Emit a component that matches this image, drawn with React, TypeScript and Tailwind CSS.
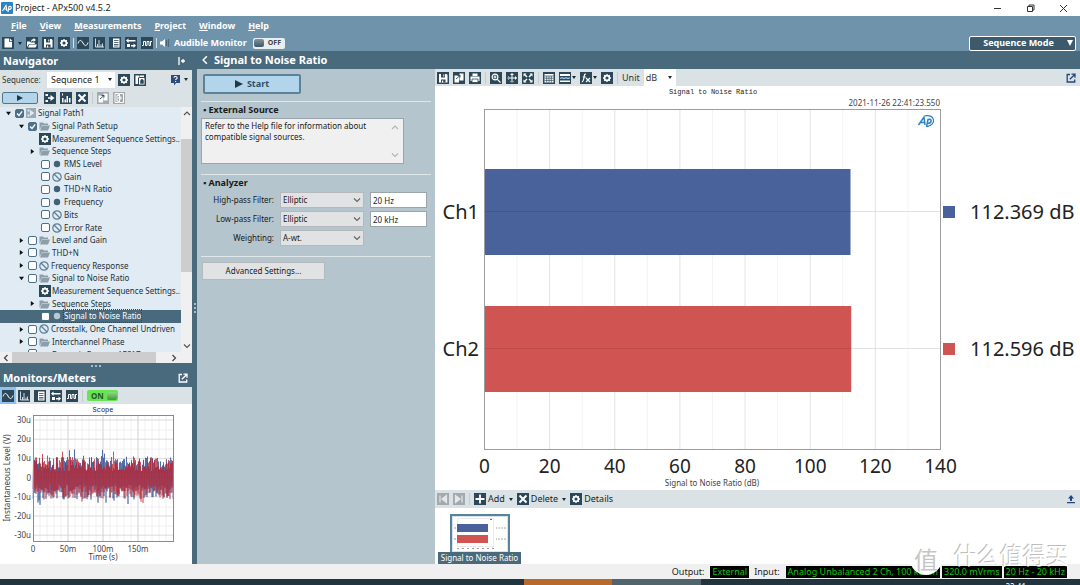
import { useState } from "react";

type IconName =
  | "new"
  | "open"
  | "save"
  | "gear"
  | "scope"
  | "fft"
  | "list"
  | "swap"
  | "digital"
  | "copyLock"
  | "stepIn"
  | "bars"
  | "close"
  | "copy"
  | "addPage"
  | "print"
  | "zoom"
  | "pan"
  | "fit"
  | "table"
  | "limits"
  | "fx"
  | "first"
  | "last"
  | "plus";

type TreeItem = {
  label: string;
  depth: 0 | 1 | 2;
  arrow?: "open" | "closed";
  check?: boolean;
  icon: "path" | "folder" | "gear" | "dot" | "off";
  selected?: boolean;
};

const gearPath = (
  <>
    <circle cx="6" cy="6" r="2.4" fill="none" stroke="#fff" strokeWidth="1.6" />
    <path
      d="M6 2v1.4M6 8.600v1.4M2 6h1.400M8.600 6H10M3.200 3.200l1 1M7.800 7.800l1 1M3.200 8.800l1-1M7.800 4.200l1-1"
      stroke="#fff"
      strokeWidth="1.3"
    />
  </>
);

const glyphs: Record<IconName, React.ReactNode> = {
  new: <path d="M2.500 1.500h4.500v3.300h3V10.500H2.500zM7.800 1.200L10.300 3.900H7.800z" fill="#fff" />,
  open: (
    <>
      <path d="M1 10V4.500h3l.8 1h4V7H3z" fill="#fff" />
      <path d="M2 10.500l1.500-3H11L9.500 10.500z" fill="#fff" />
      <path d="M5 4.500C5 2.800 6 2.200 7.500 2.200V1L10 3 7.500 5V3.700C6.500 3.700 6 4 6 4.500z" fill="#fff" />
    </>
  ),
  save: (
    <>
      <path d="M2 2h7.500L10.500 3v7.500H2z" fill="#fff" />
      <path d="M4 2h4v3.500H4zM4 7.500h4.500v3H4z" fill="#2c4858" />
      <path d="M6.300 2.500h1v2h-1zM5 8.500h1.200v2H5z" fill="#fff" />
    </>
  ),
  gear: gearPath,
  scope: <path d="M1 6.500C2.500 2.500 4 2.500 6 6s3.500 3.500 5-.5" fill="none" stroke="#fff" strokeWidth="1" />,
  fft: <path d="M2.500 1.500v8.500H11M4.500 10V7M6 10V3M8 10V7.500M9.500 10V6.500" fill="none" stroke="#dce8f2" strokeWidth=".9" />,
  list: (
    <>
      <path d="M4 1.500h6.500v9H4z" fill="#fff" />
      <path d="M5 3.500h4.500M5 5.500h4.500M5 7.500h4.500M5 9h4.500" stroke="#2c4858" strokeWidth=".8" />
    </>
  ),
  swap: <path d="M1 3.500L3.500 1.500V3h7v1.500h-7V6zM11 8.500L8.500 6.500V8H6v1.500h2.500V11zM2 7h3v3H2z" fill="#fff" />,
  digital: <path d="M1 8.500h1.500v-4h2v4H6v-4h2v4h1.500v-4H11" fill="none" stroke="#fff" strokeWidth="1" />,
  copyLock: (
    <>
      <path d="M1.500 1.500h4v2H4V10H1.500zM5 4h5.500v6.500H5z" fill="#fff" />
      <path d="M6.500 6.500h3v3h-3zM7 6.500V5.500h2v1" fill="#2c4858" stroke="#2c4858" strokeWidth=".5" />
      <path d="M6 1.500h4v1.500H6z" fill="#fff" />
    </>
  ),
  stepIn: <path d="M1.500 2h2.500v2H1.500zM1.500 8h2.500v2H1.500zM4 5.300h2.500V3L10.500 6l-4 3V6.700H4z" fill="#fff" />,
  bars: <path d="M2 1.500h1v2H2zM2 10.500V6h1.500v4.500zM4.500 10.500v-3H6v3zM6.500 10.500V4H8v6.500zM9 10.500V6h1.500v4.500z" fill="#fff" />,
  close: <path d="M2.500 2.500l7 7M9.500 2.500l-7 7" stroke="#fff" strokeWidth="2" />,
  copy: (
    <>
      <path d="M1.500 3.500h4.500v7H1.500zM6.500 1.500h4v7H6.500z" fill="#fff" />
      <path d="M3 7l4-3.500M7 3v2.500M4.500 3.500H7" stroke="#2c4858" strokeWidth=".9" />
    </>
  ),
  addPage: <path d="M2 1.500h3.500v2H4V9h1.500v1.500H2zM6.500 1.500h4v9h-4zM5 6h4M7 4v4" fill="none" stroke="#fff" strokeWidth="1" />,
  print: (
    <>
      <path d="M3.500 1.500h5V4h-5zM1.500 4.500h9V9h-9z" fill="#fff" />
      <path d="M3 7h6v3.500H3z" fill="#fff" stroke="#2c4858" strokeWidth=".8" />
    </>
  ),
  zoom: (
    <>
      <circle cx="5" cy="5" r="2.900" fill="none" stroke="#fff" strokeWidth="1.2" />
      <path d="M7.300 7.300L10.500 10.500M3.600 5h2.800M5 3.600v2.800" stroke="#fff" strokeWidth="1.2" />
    </>
  ),
  pan: <path d="M5.500 1h1v4.500H11v1H6.500V11h-1V6.500H1v-1h4.500zM4 3l2-2 2 2zM4 9l2 2 2-2zM3 4L1 6l2 2zM9 4l2 2-2 2z" fill="#fff" />,
  fit: <path d="M1.500 1.500h3l-1 1 2 2-1 1-2-2-1 1zM10.500 1.500v3l-1-1-2 2-1-1 2-2-1-1zM1.500 10.500v-3l1 1 2-2 1 1-2 2 1 1zM10.500 10.500h-3l1-1-2-2 1-1 2 2 1-1z" fill="#fff" />,
  table: (
    <>
      <path d="M1.500 2h9v8.500h-9z" fill="#fff" />
      <path d="M1.500 4h9M1.500 6.200h9M1.500 8.400h9M3.700 4v6.500M6 4v6.500M8.300 4v6.500" stroke="#2c4858" strokeWidth=".7" />
    </>
  ),
  limits: (
    <>
      <path d="M1 2h10v2H1zM1 8.500h10v1.500H1z" fill="#fff" />
      <path d="M1 6.500l2-.8 2 .8 2-.8 2 .8 2-.8" fill="none" stroke="#a9c7ea" strokeWidth="1.200" />
    </>
  ),
  fx: <path d="M6 2.200C4.500 1.500 4.400 3 4 5.500S3.200 10 1.800 9.800M2.800 5h3M6 6l4 4M10 6l-4 4" fill="none" stroke="#fff" strokeWidth="1.200" />,
  first: <path d="M3 2.500v7M9.500 2.500L5 6l4.500 3.500z" fill="#e4e8ea" stroke="#e4e8ea" strokeWidth="1.200" />,
  last: <path d="M9 2.500v7M2.500 2.500L7 6 2.500 9.500z" fill="#e4e8ea" stroke="#e4e8ea" strokeWidth="1.200" />,
  plus: <path d="M6 1.500v9M1.500 6h9" stroke="#fff" strokeWidth="1.800" />,
};

const Tile = ({ name, tone = "dark" }: { name: IconName; tone?: "dark" | "muted" }): React.ReactNode => (
  <svg viewBox="0 0 12 12" className="size-3 shrink-0" aria-hidden="true">
    <rect width="12" height="12" fill={tone === "dark" ? "#2c4858" : "#a3a9ac"} />
    {glyphs[name]}
  </svg>
);

const ToolButton = ({
  name,
  label,
  tone,
}: {
  name: IconName;
  label: string;
  tone?: "dark" | "muted";
}): React.ReactNode => (
  <button type="button" aria-label={label} className="flex shrink-0">
    <Tile name={name} tone={tone} />
  </button>
);

const Caret = (): React.ReactNode => (
  <svg viewBox="0 0 4 3" className="h-[3px] w-1 shrink-0" aria-hidden="true">
    <path d="M0 0h4L2 3z" fill="#1c2b33" />
  </svg>
);

const Divider = ({ light }: { light?: boolean }): React.ReactNode => (
  <span className={light ? "-mx-px h-2.5 w-px shrink-0 bg-[#d5e0e8]" : "h-3 w-px shrink-0 bg-[#c3cccf]"} />
);

const Chevron = ({ dir, className }: { dir: "up" | "down" | "left" | "right"; className: string }): React.ReactNode => {
  const d = {
    up: "M1 6l3-3 3 3",
    down: "M1 2.500l3 3 3-3",
    left: "M5.500 1L2.500 4l3 3",
    right: "M2.500 1l3 3-3 3",
  };
  return (
    <svg viewBox="0 0 8 8" className={className} fill="none" stroke="currentColor" strokeWidth="1.200" aria-hidden="true">
      <path d={d[dir]} />
    </svg>
  );
};

const PopOut = ({ color }: { color: string }): React.ReactNode => (
  <svg viewBox="0 0 10 10" className="size-2.5" fill="none" stroke={color} strokeWidth="1.300" aria-hidden="true">
    <path d="M4 1.500H1.200v7.500H8.700V6.500M3.800 6.300L8.300 2M5.500 1.200H9v3.500" />
  </svg>
);

const ApLogo = (): React.ReactNode => (
  <svg viewBox="0 0 12 12" className="size-3" aria-hidden="true">
    <rect width="12" height="12" rx="1" fill="#2b83c4" />
    <path d="M1.500 9L5 3.500 6 9M3 7h3M7 10l1-5.500c3-1 3 3-.3 3" fill="none" stroke="#fff" strokeWidth="1.100" />
  </svg>
);

const menus = ["File", "View", "Measurements", "Project", "Window", "Help"];

const TitleBar = (): React.ReactNode => (
  <div className="flex h-4 items-center bg-white pr-3 pl-px">
    <ApLogo />
    <h1 className="ml-0.5 flex-1 text-[9px] text-[#222]">Project - APx500 v4.5.2</h1>
    <div className="flex items-center gap-6 text-[#333]">
      <button type="button" aria-label="Minimize">
        <svg viewBox="0 0 9 9" className="size-[9px]">
          <path d="M1 4.500h7" stroke="currentColor" />
        </svg>
      </button>
      <button type="button" aria-label="Restore">
        <svg viewBox="0 0 9 9" className="size-[9px]" fill="none" stroke="currentColor">
          <path d="M1.500 2.500h5v5h-5zM3 2.500V1h5v5H6.500" />
        </svg>
      </button>
      <button type="button" aria-label="Close">
        <svg viewBox="0 0 9 9" className="size-[9px]">
          <path d="M1 1l7 7M8 1L1 8" stroke="currentColor" />
        </svg>
      </button>
    </div>
  </div>
);

const MenuBar = (): React.ReactNode => (
  <div className="bg-[#6f93ab]">
    <nav className="flex h-[19px] items-center gap-[13px] pl-[11px] text-[9px] font-bold text-white">
      {menus.map((menu) => (
        <button key={menu} type="button">
          <span className="underline">{menu[0]}</span>
          {menu.slice(1)}
        </button>
      ))}
    </nav>
    <div className="flex h-4 items-center gap-1 pr-1 pl-0.5">
      <ToolButton name="new" label="New" />
      <Caret />
      <ToolButton name="open" label="Open" />
      <ToolButton name="save" label="Save" />
      <ToolButton name="gear" label="Settings" />
      <Divider light />
      <ToolButton name="scope" label="Scope" />
      <ToolButton name="fft" label="FFT" />
      <ToolButton name="list" label="Meters" />
      <ToolButton name="swap" label="Transfer" />
      <ToolButton name="digital" label="Digital" />
      <Divider light />
      <svg viewBox="0 0 10 10" className="size-2.5 shrink-0" aria-hidden="true">
        <path d="M0 3.500h2L5 1v8L2 6.500H0z" fill="#fff" />
        <path d="M6.500 2v6M8.500 1v8" stroke="#4a687b" strokeWidth="1.200" />
      </svg>
      <span id="audible" className="text-[9px] font-bold text-white">
        Audible Monitor
      </span>
      <button
        type="button"
        role="switch"
        aria-checked="false"
        aria-labelledby="audible"
        className="ml-0.5 flex h-[11px] w-8 items-center rounded-xs bg-[#e9eef1] pl-px text-[7px] font-bold text-[#444]"
      >
        <span className="h-2 w-2.5 rounded-xs bg-linear-to-b from-[#8296a2] to-[#3e5664]" />
        <span className="ml-1">OFF</span>
      </button>
      <button
        type="button"
        className="ml-auto flex h-[15px] w-[107px] items-center rounded-xs border border-white bg-[#3c5a6c] pr-0.5 text-[9px] font-bold text-white"
      >
        <span className="flex-1">Sequence Mode</span>
        <svg viewBox="0 0 6 6" className="size-1.5" aria-hidden="true">
          <path d="M0 0h6L3 6z" fill="#fff" />
        </svg>
      </button>
    </div>
  </div>
);

const treeItems: TreeItem[] = [
  { label: "Signal Path1", depth: 0, arrow: "open", check: true, icon: "path" },
  { label: "Signal Path Setup", depth: 1, arrow: "open", check: true, icon: "folder" },
  { label: "Measurement Sequence Settings..", depth: 2, icon: "gear" },
  { label: "Sequence Steps", depth: 2, arrow: "closed", icon: "folder" },
  { label: "RMS Level", depth: 2, check: false, icon: "dot" },
  { label: "Gain", depth: 2, check: false, icon: "off" },
  { label: "THD+N Ratio", depth: 2, check: false, icon: "dot" },
  { label: "Frequency", depth: 2, check: false, icon: "dot" },
  { label: "Bits", depth: 2, check: false, icon: "off" },
  { label: "Error Rate", depth: 2, check: false, icon: "off" },
  { label: "Level and Gain", depth: 1, arrow: "closed", check: false, icon: "folder" },
  { label: "THD+N", depth: 1, arrow: "closed", check: false, icon: "folder" },
  { label: "Frequency Response", depth: 1, arrow: "closed", check: false, icon: "off" },
  { label: "Signal to Noise Ratio", depth: 1, arrow: "open", check: false, icon: "folder" },
  { label: "Measurement Sequence Settings..", depth: 2, icon: "gear" },
  { label: "Sequence Steps", depth: 2, arrow: "closed", icon: "folder" },
  { label: "Signal to Noise Ratio", depth: 2, check: false, icon: "dot", selected: true },
  { label: "Crosstalk, One Channel Undriven", depth: 1, arrow: "closed", check: false, icon: "off" },
  { label: "Interchannel Phase", depth: 1, arrow: "closed", check: false, icon: "folder" },
];

const indent = { 0: "pl-1", 1: "pl-[17px]", 2: "pl-7" };

const TreeIcon = ({ item }: { item: TreeItem }): React.ReactNode => {
  switch (item.icon) {
    case "gear":
      return <Tile name="gear" />;
    case "folder":
      return (
        <svg viewBox="0 0 11 10" className="h-2.5 w-[11px] shrink-0" aria-hidden="true">
          <path d="M.5 9V1.500h3.500l1 1h4V4H3z" fill="#8b9ea9" />
          <path d="M1 9.500L3 4.500h8L9 9.500z" fill="#8b9ea9" />
        </svg>
      );
    case "path":
      return (
        <svg viewBox="0 0 10 10" className="size-2.5 shrink-0" aria-hidden="true">
          <rect width="10" height="10" fill="#9aabb5" />
          <path d="M1.500 1.500h2v2h-2zM1.500 6.500h2v2h-2zM4 2l4.500 3L4 8z" fill="#dfe9f1" />
        </svg>
      );
    case "dot":
      return (
        <svg viewBox="0 0 10 10" className="size-2.5 shrink-0" aria-hidden="true">
          <circle cx="5" cy="5" r="3.200" fill={item.selected ? "#b9c8d1" : "#3f6277"} />
        </svg>
      );
    case "off":
      return (
        <svg viewBox="0 0 10 10" className="size-2.5 shrink-0" fill="none" stroke="#5d7f94" strokeWidth="1.200" aria-hidden="true">
          <circle cx="5" cy="5" r="4.200" />
          <path d="M2 2l6 6" />
        </svg>
      );
  }
};

const Checkbox = ({ label, checked }: { label: string; checked: boolean }): React.ReactNode => (
  <span className="relative flex shrink-0">
    <input
      type="checkbox"
      defaultChecked={checked}
      aria-label={label}
      className="peer size-[9px] appearance-none rounded-xs border border-[#4c7087] bg-white checked:bg-[#4c7087]"
    />
    <svg
      viewBox="0 0 9 9"
      className="pointer-events-none absolute inset-0 hidden size-[9px] peer-checked:block"
      aria-hidden="true"
    >
      <path d="M2 4.500l2 2L7.200 2.300" fill="none" stroke="#fff" strokeWidth="1.300" />
    </svg>
  </span>
);

const TreeRow = ({ item }: { item: TreeItem }): React.ReactNode => {
  const leaf = item.depth === 2 && item.check !== undefined;
  return (
    <li
      className={`flex flex-1 items-center whitespace-nowrap ${indent[item.depth]} ${item.selected ? "bg-[#49697d] text-white" : "text-[#243038]"}`}
    >
      <span className={`flex shrink-0 items-center ${leaf ? "w-[13px]" : "w-[11px]"}`}>
        {item.arrow && (
          <svg viewBox="0 0 6 6" className="ml-0.5 size-[5px]" aria-hidden="true">
            <path d={item.arrow === "open" ? "M0 1h6L3 5z" : "M1 0l4 3-4 3z"} fill="#111" />
          </svg>
        )}
      </span>
      {item.check !== undefined && (
        <span className="mr-0.5 flex">
          <Checkbox label={item.label} checked={item.check} />
        </span>
      )}
      <TreeIcon item={item} />
      <span
        className={`${item.icon === "gear" ? "ml-px" : "ml-0.5"} ${item.selected ? "outline-1 outline-[#2f4653] outline-dotted" : ""}`}
      >
        {item.label}
      </span>
    </li>
  );
};

const Navigator = (): React.ReactNode => (
  <section>
    <header className="flex h-[19px] items-center justify-between bg-[#49697d] pt-px pr-1.5 pl-[3px] text-white">
      <h2 className="text-[11px] font-bold">Navigator</h2>
      <svg viewBox="0 0 8 8" className="size-2" aria-hidden="true">
        <path d="M1 0v8M3 4h4M5 2v4" stroke="#fff" strokeWidth="1.300" />
      </svg>
    </header>
    <div className="flex flex-col bg-[#dae2e5]">
      <div className="flex h-[19px] items-center pr-1 pl-0.5">
        <label htmlFor="sequence" className="w-11 text-[8px] text-[#333]">
          Sequence:
        </label>
        <span className="relative ml-px flex h-4 w-[68px] items-center bg-white">
          <select id="sequence" className="w-full appearance-none pl-1 text-[9px] text-[#222]">
            <option>Sequence 1</option>
          </select>
          <span className="pointer-events-none absolute right-[3px] flex">
            <Caret />
          </span>
        </span>
        <span className="ml-[3px] flex gap-1">
          <ToolButton name="gear" label="Sequence settings" />
          <ToolButton name="copyLock" label="Lock sequence" />
        </span>
        <button type="button" aria-label="Help" className="ml-auto flex items-center gap-0.5">
          <svg viewBox="0 0 12 12" className="size-3" aria-hidden="true">
            <path d="M1 1h9v8H6l-2 2.500V9H1z" fill="#2c4a7a" />
            <path d="M4 3.800c0-2 3.200-1.700 3.200.1 0 1.200-1.600 1-1.600 2.200M5.600 7v1" fill="none" stroke="#fff" strokeWidth="1.100" />
          </svg>
          <Caret />
        </button>
      </div>
      <div className="flex h-[18px] items-center gap-1 pl-0.5">
        <button
          type="button"
          aria-label="Run sequence"
          className="mr-0.5 flex h-3 w-9 items-center justify-center rounded-xs border border-[#4b7791] bg-[#b3d5ec]"
        >
          <svg viewBox="0 0 6 6" className="size-1.5" aria-hidden="true">
            <path d="M0 0l6 3-6 3z" fill="#1f3947" />
          </svg>
        </button>
        <ToolButton name="stepIn" label="Add signal path" />
        <ToolButton name="bars" label="Add measurement" />
        <ToolButton name="close" label="Remove" />
        <Divider />
        <ToolButton name="copy" label="Copy" tone="muted" />
        <ToolButton name="addPage" label="Paste" tone="muted" />
      </div>
    </div>
    <div className="flex">
      <div className="flex min-w-0 flex-1 flex-col overflow-hidden bg-[#e0ebf4]">
        <ul className="flex h-[241px] flex-col text-[8px] leading-3">
          {treeItems.map((item, i) => (
            <TreeRow key={i} item={item} />
          ))}
        </ul>
        <div className="flex h-1 items-start overflow-hidden pt-px pl-7 text-[8px] leading-3 text-[#243038]">
          <Checkbox label="Dynamic Range" checked={false} />
          <span className="ml-[15px] whitespace-nowrap">Dynamic Range - AES17</span>
        </div>
      </div>
      <div className="flex w-[11px] flex-col items-center justify-between bg-[#f0f0f0] py-0.5 text-[#555]">
        <Chevron dir="up" className="size-2" />
        <span className="mt-[22px] w-full flex-1 bg-[#cdcdcd]" />
        <span className="h-[70px]" />
        <Chevron dir="down" className="size-2" />
      </div>
    </div>
    <div className="flex h-[11px] items-center bg-[#f0f0f0] pr-3.5 pl-0.5 text-[#444]">
      <Chevron dir="left" className="size-2" />
      <span className="ml-0.5 h-full flex-1 bg-[#cdcdcd]" />
      <Chevron dir="right" className="ml-3.5 size-2" />
    </div>
  </section>
);

// Fixed seed so that the noise trace is the same on every render.
const noiseTrace = (seed: number, amp: number): string => {
  let s = seed;
  const next = (): number => {
    s = (s * 16807) % 2147483647;
    return s / 2147483647;
  };
  const points: string[] = [];
  for (let i = 0; i <= 280; i++) {
    const sign = i % 2 === 0 ? 1 : -1;
    const peak = next() > 0.9 ? 1.3 : 1;
    const y = 74 + sign * amp * peak * (0.3 + 0.7 * next());
    points.push(`${(33 + i / 2).toFixed(1)},${y.toFixed(1)}`);
  }
  return points.join(" ");
};

const blueTrace = noiseTrace(7, 22);
const redTrace = noiseTrace(1234, 21);

const scopeLevels = ["30u", "20u", "10u", "0", "-10u", "-20u", "-30u"];
const scopeTimes = ["0", "50m", "100m", "150m"];

const ScopeChart = (): React.ReactNode => (
  <svg viewBox="0 0 192 160" className="block w-full bg-white" role="img" aria-label="Scope">
    <text x="103" y="8" textAnchor="middle" fontSize="7" fill="#222" className="font-['Liberation_Mono',monospace]">
      Scope
    </text>
    {Array.from({ length: 19 }, (_, i) => (
      <path key={i} d={`M${40 + i * 7} 11v126`} stroke="#ececec" strokeWidth=".8" />
    ))}
    {[26, 45, 64, 84, 103, 122].map((y) => (
      <path key={y} d={`M33 ${y}h140`} stroke="#ececec" strokeWidth=".8" />
    ))}
    {[68, 103, 138].map((x) => (
      <path key={x} d={`M${x} 11v126`} stroke="#d2d2d2" strokeWidth=".8" />
    ))}
    {scopeLevels.map((label, i) => (
      <g key={label}>
        <path d={`M33 ${16 + i * 19.2}h140`} stroke="#d2d2d2" strokeWidth=".8" />
        <text x="31" y={19 + i * 19.2} textAnchor="end" fontSize="8" fill="#444">
          {label}
        </text>
      </g>
    ))}
    <polyline points={blueTrace} fill="none" stroke="#2f4f93" strokeWidth=".6" />
    <polyline points={redTrace} fill="none" stroke="#c0202a" strokeWidth=".6" strokeOpacity=".85" />
    <rect x="33.500" y="11.500" width="140" height="126" fill="none" stroke="#8a8a8a" />
    {scopeTimes.map((label, i) => (
      <text key={label} x={33 + i * 35} y="148" textAnchor="middle" fontSize="8" fill="#444">
        {label}
      </text>
    ))}
    <text x="103" y="156" textAnchor="middle" fontSize="8" fill="#444">
      Time (s)
    </text>
    <text transform="rotate(-90 10 74)" x="10" y="74" textAnchor="middle" fontSize="8" fill="#444">
      Instantaneous Level (V)
    </text>
  </svg>
);

const GripDots = (): React.ReactNode => (
  <div className="flex h-1.5 items-center justify-center gap-0.5 bg-[#49697d]">
    <span className="size-0.5 bg-[#a9bcc8]" />
    <span className="size-0.5 bg-[#a9bcc8]" />
    <span className="size-0.5 bg-[#a9bcc8]" />
  </div>
);

const Monitors = (): React.ReactNode => {
  const [on, setOn] = useState(true);
  return (
    <section className="flex flex-1 flex-col bg-white">
      <header className="flex h-[18px] items-center justify-between bg-[#49697d] pr-1 pl-[3px] text-white">
        <h2 className="text-[11px] font-bold">Monitors/Meters</h2>
        <button type="button" aria-label="Undock monitors">
          <PopOut color="#fff" />
        </button>
      </header>
      <div className="flex h-[17px] items-center gap-1 bg-[#dae2e5]">
        <span className="-mr-0.5 flex h-full items-center bg-[#8fc3ec] px-0.5">
          <ToolButton name="scope" label="Scope monitor" />
        </span>
        <ToolButton name="fft" label="FFT monitor" />
        <ToolButton name="list" label="Meters monitor" />
        <ToolButton name="swap" label="Transfer monitor" />
        <ToolButton name="digital" label="Digital monitor" />
        <Divider />
        <button
          type="button"
          role="switch"
          aria-checked={on}
          aria-label="Monitors on"
          onClick={() => setOn(!on)}
          className="flex h-[11px] w-[31px] items-center justify-between rounded-xs bg-[#68e353] px-px text-[8px] font-bold text-[#24582a]"
        >
          <span className="ml-[3px]">{on ? "ON" : "OFF"}</span>
          <span className="h-2 w-2.5 rounded-xs bg-linear-to-b from-[#8fd985] to-[#3a9b35]" />
        </button>
      </div>
      <ScopeChart />
    </section>
  );
};

const FilterSelect = ({ id, value }: { id: string; value: string }): React.ReactNode => (
  <span className="relative flex h-4 w-[84px] items-center border border-[#b5b9bb] bg-[#e1e2e3]">
    <select id={id} className="w-full appearance-none pl-0.5 text-[8px]">
      <option>{value}</option>
    </select>
    <Chevron dir="down" className="pointer-events-none absolute right-0.5 size-2 text-[#666]" />
  </span>
);

const filterRows = [
  { id: "high-pass", label: "High-pass Filter:", type: "Elliptic", value: "20 Hz" },
  { id: "low-pass", label: "Low-pass Filter:", type: "Elliptic", value: "20 kHz" },
  { id: "weighting", label: "Weighting:", type: "A-wt.", value: null },
];

const Rule = (): React.ReactNode => <div className="h-px shrink-0 bg-[#dfe7eb]" />;

const MeasurementPanel = (): React.ReactNode => (
  <section className="flex w-[238px] shrink-0 flex-col bg-[#b4c5ce] pr-1 pl-1 text-[8px] text-[#1a1a1a]">
    <button
      type="button"
      className="mt-[5px] ml-0.5 flex h-5 w-[98px] items-center justify-center gap-1 rounded-xs border-2 border-[#5b8298] bg-[#b3d5ec] text-[9px] font-bold text-[#2c5166]"
    >
      <svg viewBox="0 0 8 8" className="size-2" aria-hidden="true">
        <path d="M0 0l8 4-8 4z" fill="#1f3947" />
      </svg>
      Start
    </button>
    <div className="h-[7px]" />
    <Rule />
    <h3 className="mt-px ml-0.5 text-[9px] leading-[14px] font-bold">▪ External Source</h3>
    <div className="mt-px flex h-[46px] w-[203px] border border-[#9aa6ac] bg-[#f0f0f0]">
      <textarea
        readOnly
        aria-label="External source note"
        className="min-w-0 flex-1 resize-none overflow-hidden py-px pl-[3px] text-[8px] leading-[11px]"
        value={"Refer to the Help file for information about\ncompatible signal sources."}
      />
      <span className="flex w-3 flex-col justify-between py-1 text-[#b5b5b5]">
        <Chevron dir="up" className="size-2" />
        <Chevron dir="down" className="size-2" />
      </span>
    </div>
    <div className="h-2.5" />
    <Rule />
    <h3 className="mt-px ml-0.5 text-[9px] leading-[14px] font-bold">▪ Analyzer</h3>
    <div className="mt-0.5 flex flex-col gap-[3px]">
      {filterRows.map((row) => (
        <div key={row.id} className="flex items-center gap-1.5">
          <label htmlFor={row.id} className="w-[73px] text-right">
            {row.label}
          </label>
          <FilterSelect id={row.id} value={row.type} />
          {row.value && (
            <input
              aria-label={`${row.label} frequency`}
              defaultValue={row.value}
              className="h-4 w-[57px] border border-[#9aa6ac] bg-white pl-0.5"
            />
          )}
        </div>
      ))}
    </div>
    <div className="h-2.5" />
    <Rule />
    <button type="button" className="mt-[5px] ml-px h-[18px] w-[123px] border border-[#b5b9bb] bg-[#e1e2e3]">
      Advanced Settings...
    </button>
  </section>
);

const channels = [
  { name: "Ch1", db: 112.369, color: "#49629b", y: 83 },
  { name: "Ch2", db: 112.596, color: "#d05552", y: 220 },
];

const pxPerDb = 456 / 140;

const RatioChart = (): React.ReactNode => (
  <svg viewBox="0 0 645 404" className="block w-full bg-white" role="img" aria-label="Signal to Noise Ratio">
    <text x="278" y="8" textAnchor="middle" fontSize="7" fill="#222" className="font-['Liberation_Mono',monospace]">
      Signal to Noise Ratio
    </text>
    <text x="505" y="20" textAnchor="end" fontSize="8" fill="#444">
      2021-11-26 22:41:23.550
    </text>
    {Array.from({ length: 13 }, (_, i) => (
      <path
        key={i}
        d={`M${49.5 + (i + 1) * 10 * pxPerDb} 24v340`}
        stroke={i % 2 === 0 ? "#f3f3f3" : "#e2e2e2"}
      />
    ))}
    {channels.map((ch) => (
      <g key={ch.name}>
        <path d={`M50 ${ch.y + 42.5}h456`} stroke="#e2e2e2" />
        <rect x="49.500" y={ch.y} width={ch.db * pxPerDb} height="86" fill={ch.color} />
        <path d={`M50 ${ch.y + 42.5}h366`} stroke="#000" strokeOpacity=".1" />
        <text x="44" y={ch.y + 50} textAnchor="end" fontSize="20" fill="#222">
          {ch.name}
        </text>
        <rect x="508" y={ch.y + 37} width="12" height="12" fill={ch.color} />
        <text x="535" y={ch.y + 50} fontSize="20" fill="#222">
          {ch.db} dB
        </text>
      </g>
    ))}
    <rect x="49.500" y="23.500" width="456" height="340" fill="none" stroke="#9c9c9c" />
    {[0, 20, 40, 60, 80, 100, 120, 140].map((v) => (
      <text key={v} x={49.5 + v * pxPerDb} y="387" textAnchor="middle" fontSize="19" fill="#222">
        {v}
      </text>
    ))}
    <text x="277" y="400" textAnchor="middle" fontSize="8" fill="#444">
      Signal to Noise Ratio (dB)
    </text>
    <g fill="none" stroke="#2b83c4" strokeWidth="1.500">
      <path d="M483.500 39l5.500-8 1 8M485.500 36.500h5M491.500 41l1.500-7.500c4.500-1.500 4 4-.5 4" />
      <path d="M490 29.800c10-2 12 9 2 10.800" strokeWidth="1.200" />
    </g>
  </svg>
);

const Thumbnail = (): React.ReactNode => (
  <svg viewBox="0 0 54 34" className="h-[34px] w-[54px] bg-white" aria-hidden="true">
    <path d="M4.500 1.500h36v28h-36z" fill="none" stroke="#dcdcdc" strokeWidth=".6" />
    <rect x="4" y="7" width="31" height="8" fill="#49629b" />
    <rect x="4" y="18" width="31" height="8" fill="#d05552" />
    <path d="M1 11h2M1 22h2M43 11h1M43 22h1M4 31.500h40" stroke="#999" strokeDasharray="2 3" />
    <path d="M45 11h8M45 22h8" stroke="#aaa" strokeDasharray="2 1" />
    <path d="M37 2.500h2" stroke="#2b83c4" />
  </svg>
);

const Results = (): React.ReactNode => (
  <section className="flex min-w-0 flex-1 flex-col bg-white">
    <div className="flex h-[17px] items-center gap-1 bg-[#dae2e5] pr-1 pl-0.5 text-[#333]">
      <ToolButton name="save" label="Save graph" />
      <ToolButton name="copy" label="Copy graph" />
      <ToolButton name="print" label="Print graph" />
      <Divider />
      <ToolButton name="zoom" label="Zoom" />
      <ToolButton name="pan" label="Pan" />
      <ToolButton name="fit" label="Fit" />
      <Divider />
      <ToolButton name="table" label="Data table" />
      <button type="button" aria-label="Limits" className="flex items-center gap-px">
        <Tile name="limits" />
        <Caret />
      </button>
      <button type="button" aria-label="Functions" className="flex items-center gap-px">
        <Tile name="fx" />
        <Caret />
      </button>
      <ToolButton name="gear" label="Graph settings" />
      <Divider />
      <label htmlFor="unit" className="text-[9px]">
        Unit
      </label>
      <span className="relative flex h-full w-8 items-center bg-white">
        <select id="unit" className="w-full appearance-none pl-0.5 text-[9px]">
          <option>dB</option>
        </select>
        <span className="pointer-events-none absolute right-1 flex">
          <Caret />
        </span>
      </span>
      <button type="button" aria-label="Undock graph" className="ml-auto">
        <PopOut color="#24457c" />
      </button>
    </div>
    <RatioChart />
    <div className="flex h-[18px] items-center gap-1 bg-[#dae2e5] pr-1 pl-0.5 text-[9px] text-[#222]">
      <ToolButton name="first" label="First" tone="muted" />
      <ToolButton name="last" label="Last" tone="muted" />
      <Divider />
      <button type="button" className="flex items-center gap-0.5">
        <Tile name="plus" />
        Add
        <span className="ml-0.5 flex">
          <Caret />
        </span>
      </button>
      <button type="button" className="flex items-center gap-0.5">
        <Tile name="close" />
        Delete
        <span className="ml-0.5 flex">
          <Caret />
        </span>
      </button>
      <button type="button" className="flex items-center gap-0.5">
        <Tile name="gear" />
        Details
      </button>
      <button type="button" aria-label="Collapse" className="ml-auto">
        <svg viewBox="0 0 10 10" className="size-2.5">
          <path d="M5 1l3 3.500H6V7H4V4.500H2zM1 8h8v1.300H1z" fill="#24457c" />
        </svg>
      </button>
    </div>
    <button type="button" className="mt-1.5 ml-[3px] flex w-[83px] flex-col items-center text-[8px] text-white">
      <span className="border-2 border-b-0 border-[#5b8298] bg-[#d5e4ee] px-px py-px">
        <Thumbnail />
      </span>
      <span className="h-3 w-full bg-[#49697d] leading-3">Signal to Noise Ratio</span>
    </button>
  </section>
);

const StatusBar = (): React.ReactNode => (
  <footer>
    <div className="flex h-[15px] items-center justify-end bg-[#f0f0f0] pr-[13px] text-[9px] whitespace-nowrap text-[#222]">
      <span className="mr-1.5">Output:</span>
      <output className="mr-[5px] bg-black px-0.5 leading-3 text-[#12c412]">External</output>
      <span className="mr-1.5">Input:</span>
      <output className="bg-black px-0.5 leading-3 text-[#12c412]">Analog Unbalanced 2 Ch, 100 kohm</output>
      <output className="ml-0.5 bg-black px-0.5 leading-3 text-[#12c412]">320.0 mVrms</output>
      <output className="ml-0.5 bg-black px-0.5 leading-3 text-[#12c412]">20 Hz - 20 kHz</output>
    </div>
    <div className="flex h-1.5 overflow-hidden bg-[#22343d]">
      <span className="w-[524px]" />
      <span className="w-[88px] bg-[#b96a2b]" />
      <span className="w-[89px] bg-[#51646c]" />
      <span className="mt-0.5 mr-[54px] ml-auto text-[8px] leading-3 text-white">22:41</span>
    </div>
  </footer>
);

const Watermark = (): React.ReactNode => (
  <div className="pointer-events-none absolute right-[11px] bottom-2.5 flex items-start gap-3 font-['Noto_Sans_CJK_SC',sans-serif] leading-none">
    <span className="flex size-8 items-center justify-center rounded-full bg-white text-[24px] text-[#c6c6c6]">值</span>
    <span className="text-[23px] text-white [text-shadow:-1px_-1px_0_#bdbdbd]">什么值得买</span>
  </div>
);

const App = (): React.ReactNode => (
  <div className="relative flex min-h-screen flex-col bg-[#49697d] font-['Noto_Sans',sans-serif] leading-normal">
    <TitleBar />
    <MenuBar />
    <div className="flex flex-1">
      <aside className="flex w-48 shrink-0 flex-col">
        <Navigator />
        <GripDots />
        <Monitors />
      </aside>
      <div className="flex w-[5px] flex-col items-center justify-center gap-0.5 bg-[#49697d]">
        <span className="size-0.5 bg-[#a9bcc8]" />
        <span className="size-0.5 bg-[#a9bcc8]" />
        <span className="size-0.5 bg-[#a9bcc8]" />
      </div>
      <main className="flex min-w-0 flex-1 flex-col">
        <header className="flex h-[18px] items-center gap-1 bg-[#49697d] pl-[3px] text-white">
          <Chevron dir="left" className="size-2.5" />
          <h2 className="text-[11px] font-bold">Signal to Noise Ratio</h2>
        </header>
        <div className="flex flex-1">
          <MeasurementPanel />
          <Results />
        </div>
      </main>
    </div>
    <StatusBar />
    <Watermark />
  </div>
);

export default App;
